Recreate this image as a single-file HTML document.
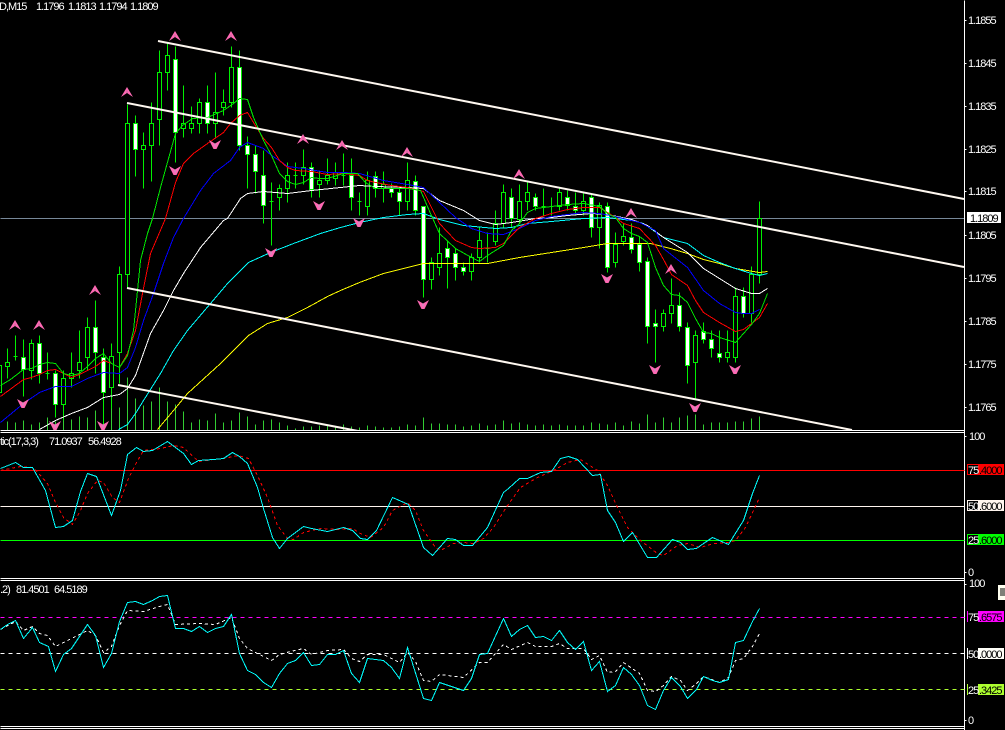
<!DOCTYPE html>
<html><head><meta charset="utf-8"><title>Chart</title>
<style>
html,body{margin:0;padding:0;background:#000;width:1005px;height:730px;overflow:hidden}
svg{display:block}
text{font-family:"Liberation Sans",sans-serif;font-size:11px;letter-spacing:-1px;fill:#fff}
.k{fill:#000}
.l{fill:none;stroke-width:1}
</style></head><body>
<svg width="1005" height="730" viewBox="0 0 1005 730" xmlns="http://www.w3.org/2000/svg" shape-rendering="crispEdges">
<defs>
<g id="u"><path d="M0-5L6 5 0 1-6 5z" fill="#ff69b4"/><path d="M0-1.500V1" stroke="#c06a9a" fill="none"/></g>
<g id="d"><path d="M-6-4L0-.5 6-4 1.500 5H-1.500z" fill="#ff69b4"/><path d="M0-.5V2.500" stroke="#b8a0c8" fill="none"/></g>
</defs>
<rect width="1005" height="730" fill="#000"/>
<g transform="translate(.5 .5)">
<!-- bid line -->
<path d="M0 218H964" stroke="#778899" class="l"/>
<!-- volumes -->
<path class="l" stroke="#32cd32" d="M7 421V430M15 422V430M23 420V430M31 424V430M39 422V430M47 417V430M55 421V430M63 417V430M71 419V430M79 416V430M87 417V430M95 410V430M103 405V430M111 408V430M119 407V430M127 377V430M135 398V430M143 405V430M151 401V430M159 387V430M167 401V430M175 404V430M183 411V430M191 422V430M199 419V430M207 420V430M215 413V430M223 422V430M231 420V430M239 412V430M247 416V430M255 424V430M263 420V430M271 419V430M279 422V430M287 425V430M295 428V430M303 426V430M311 426V430M319 425V430M327 425V430M335 427V430M343 424V430M351 426V430M359 427V430M367 425V430M375 426V430M383 427V430M391 427V430M399 426V430M407 424V430M415 425V430M423 417V430M431 423V430M439 423V430M447 424V430M455 424V430M463 426V430M471 425V430M479 423V430M487 425V430M495 424V430M503 420V430M511 423V430M519 422V430M527 424V430M535 425V430M543 424V430M551 425V430M559 424V430M567 425V430M575 425V430M583 425V430M591 422V430M599 423V430M607 424V430M615 422V430M623 425V430M631 421V430M639 423V430M647 414V430M655 422V430M663 417V430M671 422V430M679 417V430M687 415V430M695 414V430M703 424V430M711 422V430M719 422V430M727 422V430M735 421V430M743 421V430M751 418V430M759 416V430"/>
<!-- wicks and crosses -->
<path class="l" stroke="#00f000" d="M-1 360V398M7 348V378M15 335V360M13 356H17M23 339V396M31 339V379M39 335V383M47 352V379M45 373H49M55 370V417M63 370V420M71 352V387M79 330V378M87 317V370M95 300V373M103 348V425M111 343V408M119 266V383M127 104V288M135 115V176M143 132V188M151 102V181M159 50V145M167 42V90M175 46V162M183 85V137M191 106V133M199 98V133M207 85V133M215 72V137M223 89V115M231 46V107M239 50V150M247 136V188M255 145V193M263 150V223M271 182V245M269 201H273M279 184V210M287 162V202M295 162V188M293 175H297M303 149V184M311 162V197M319 171V197M327 158V184M335 162V185M343 153V185M341 175H345M351 158V210M359 192V215M357 201H361M367 171V215M375 171V197M383 171V202M391 183V197M399 188V215M407 162V210M415 175V215M423 206V297M431 257V289M439 227V275M447 240V288M455 248V280M463 262V275M471 253V280M479 227V262M487 232V262M485 248H489M495 210V245M503 184V228M511 188V227M519 184V223M527 180V210M535 193V210M543 188V215M541 206H545M551 197V215M549 206H553M559 188V210M567 190V210M575 192V214M583 193V215M591 193V237M599 202V248M607 202V272M615 232V267M623 223V245M631 223V253M639 236V271M647 257V343M655 309V362M663 309V331M671 278V323M679 292V331M687 322V383M695 330V398M703 322V343M711 330V357M719 330V362M727 330V362M735 287V362M743 287V317M751 266V322M759 201V283"/>
<!-- hollow bodies -->
<path fill="#000" stroke="#00f000" d="M-3 365h4V392h-4zM5 362h4V366h-4zM29 343h4V370h-4zM61 378h4V404h-4zM69 373h4V378h-4zM77 362h4V370h-4zM85 327h4V357h-4zM109 356h4V387h-4zM117 274h4V352h-4zM125 123h4V274h-4zM141 145h4V149h-4zM149 123h4V145h-4zM157 72h4V119h-4zM165 55h4V72h-4zM181 123h4V128h-4zM189 123h4V128h-4zM197 102h4V123h-4zM213 112h4V123h-4zM221 102h4V107h-4zM229 67h4V102h-4zM277 188h4V197h-4zM285 175h4V188h-4zM301 167h4V175h-4zM317 180h4V184h-4zM325 175h4V180h-4zM333 172h4V178h-4zM365 180h4V206h-4zM381 184h4V188h-4zM405 180h4V201h-4zM429 262h4V279h-4zM437 253h4V267h-4zM469 257h4V271h-4zM477 240h4V257h-4zM493 223h4V241h-4zM501 192h4V223h-4zM517 201h4V219h-4zM525 192h4V201h-4zM557 192h4V206h-4zM581 201h4V210h-4zM597 205h4V227h-4zM613 244h4V262h-4zM621 236h4V241h-4zM661 313h4V326h-4zM669 305h4V313h-4zM693 335h4V362h-4zM725 352h4V357h-4zM733 296h4V357h-4zM749 274h4V313h-4zM757 218h4V274h-4z"/>
<!-- white bodies -->
<path fill="#fff" stroke="#00f000" d="M21 357h4V369h-4zM37 343h4V373h-4zM53 373h4V404h-4zM93 327h4V352h-4zM101 357h4V392h-4zM133 123h4V149h-4zM173 59h4V132h-4zM205 102h4V123h-4zM237 67h4V145h-4zM245 145h4V154h-4zM253 154h4V171h-4zM261 175h4V205h-4zM309 167h4V189h-4zM349 175h4V197h-4zM373 176h4V188h-4zM389 188h4V192h-4zM397 192h4V201h-4zM413 181h4V210h-4zM421 206h4V279h-4zM445 248h4V257h-4zM453 253h4V267h-4zM461 267h4V271h-4zM509 197h4V218h-4zM533 197h4V206h-4zM565 197h4V205h-4zM573 206h4V210h-4zM589 197h4V227h-4zM605 206h4V267h-4zM629 237h4V249h-4zM637 244h4V262h-4zM645 261h4V326h-4zM653 323h4V326h-4zM677 305h4V326h-4zM685 327h4V365h-4zM701 331h4V339h-4zM709 339h4V348h-4zM717 353h4V357h-4zM741 296h4V313h-4z"/>
<!-- moving averages -->
<polyline class="l" stroke="#ffff00" points="157,429 173,410 187,393 220,363 248,335 267,323 287,317 307,307 327,296 340,290 359,282 383,273 407,267 423,263 487,263 519,257 551,252 583,247 607,243 631,243 650,243 670,248 687,253 703,259 719,263 735,268 759,272 767,271"/>
<polyline class="l" stroke="#00ffff" points="118,429 127,424 135,413 143,400 160,373 173,350 187,330 210,303 227,283 248,262 270,252 293,243 320,233 340,227 359,222 383,217 407,214 423,213 439,219 463,225 495,228 511,227 527,223 551,221 583,218 607,217 631,220 643,223 663,237 687,243 703,255 719,262 735,268 751,273 759,275 767,273"/>
<polyline class="l" stroke="#ffffff" points="39,429 55,420 71,413 87,407 103,397 119,394 127,388 135,375 150,333 163,310 173,290 183,273 200,247 223,220 227,218 240,198 247,193 263,191 287,193 311,190 340,187 359,185 375,186 407,187 423,188 439,200 463,210 479,220 495,224 511,222 535,218 551,217 567,215 591,213 607,214 631,219 647,225 663,237 687,252 703,268 719,278 735,288 751,293 759,293 767,288"/>
<polyline class="l" stroke="#0000ff" points="0,422 23,403 39,392 55,386 71,386 87,378 103,372 119,373 127,367 135,347 143,320 153,293 163,263 173,237 183,218 200,190 213,173 230,160 239,147 247,142 263,148 271,155 279,160 287,166 303,168 327,172 343,172 359,173 383,180 407,184 423,187 439,202 455,217 471,228 487,233 503,234 519,228 535,220 551,216 567,214 583,212 599,213 615,216 639,222 655,230 663,248 687,267 703,290 719,303 735,312 743,313 751,313 759,309"/>
<polyline class="l" stroke="#ff0000" points="0,396 23,379 31,377 39,374 47,370 55,369 63,373 71,377 79,374 87,370 95,366 103,360 111,363 119,367 127,353 135,330 142,293 150,253 165,218 175,182 183,163 193,153 207,143 223,132 230,123 239,115 247,112 253,122 263,138 271,147 279,160 287,167 295,170 311,171 327,174 343,173 359,175 367,180 375,182 391,185 407,187 423,191 431,207 439,223 455,240 471,247 479,248 495,247 503,243 519,227 535,218 551,213 567,209 583,207 599,207 615,217 623,223 639,228 655,245 663,259 671,274 687,285 695,300 703,312 719,322 735,331 743,329 759,317 767,303"/>
<polyline class="l" stroke="#00e800" points="0,385 10,379 23,369 31,368 39,364 47,362 55,363 63,373 71,375 79,373 87,366 95,358 103,353 111,363 119,367 127,355 133,330 140,260 147,233 152,218 160,187 175,133 182,125 192,118 207,117 223,110 233,103 239,98 247,99 253,117 263,140 271,155 279,173 287,181 295,184 303,182 311,177 319,178 327,178 343,173 357,173 365,182 375,188 391,188 407,188 420,190 430,213 439,233 455,248 471,257 479,261 487,255 503,245 511,230 519,223 527,212 535,208 551,206 567,204 583,203 599,206 607,213 615,217 623,228 631,233 639,236 647,242 655,267 663,285 671,294 679,295 687,302 695,318 703,332 711,333 719,337 735,342 743,333 751,324 759,313 767,293"/>
</g>
<!-- channel lines -->
<g stroke="#fff8f0" stroke-width="2" fill="none" shape-rendering="geometricPrecision">
<path d="M158 41L964 199"/>
<path d="M127 103L964 267"/>
<path d="M127 288L852 430"/>
<path d="M118 385L358 431"/>
</g>
<!-- arrows -->
<g shape-rendering="geometricPrecision">
<use href="#u" x="175" y="36"/><use href="#u" x="231" y="36"/><use href="#u" x="127" y="92"/><use href="#u" x="303" y="139"/><use href="#u" x="342" y="145"/><use href="#u" x="407" y="152"/><use href="#u" x="519" y="174"/><use href="#u" x="631" y="213"/><use href="#u" x="671" y="269"/><use href="#u" x="95" y="290"/><use href="#u" x="15" y="325"/><use href="#u" x="39" y="325"/>
<use href="#d" x="175" y="170"/><use href="#d" x="215" y="144"/><use href="#d" x="319" y="205"/><use href="#d" x="271" y="252"/><use href="#d" x="359" y="222"/><use href="#d" x="423" y="304"/><use href="#d" x="607" y="278"/><use href="#d" x="655" y="369"/><use href="#d" x="735" y="369"/><use href="#d" x="695" y="407"/><use href="#d" x="23" y="403"/><use href="#d" x="55" y="425"/><use href="#d" x="103" y="425"/>
</g>
<rect y="431" width="1005" height="299" fill="#000"/>
<g transform="translate(.5 .5)">
<!-- separators and axis -->
<path class="l" stroke="#fff" d="M0 430H964M0 432H964M0 578H964M0 580H964M0 726H964M0 728H964M964 0V730"/>
<path class="l" stroke="#fff" d="M964 20h2M964 63h2M964 106h2M964 149h2M964 191h2M964 235h2M964 278h2M964 321h2M964 364h2M964 407h2M964 436h2M964 572h2M964 584h2M964 720h2"/>
<!-- stochastic panel -->
<path class="l" stroke="#ff0000" d="M0 470H964"/>
<path class="l" stroke="#fff5ee" d="M0 506H964"/>
<path class="l" stroke="#00ff00" d="M0 540H964"/>
<polyline class="l" stroke="#ff0000" stroke-dasharray="3 3" points="0,470 10,468 20,466 33,467 47,483 55,502 63,517 72,524 80,510 87,493 97,480 103,482 112,497 119,502 128,478 136,462 143,450 160,448 173,445 183,447 198,461 213,459 223,458 238,455 248,458 257,475 267,497 277,525 287,538 293,539 303,532 320,528 337,529 352,528 360,533 370,537 383,527 392,510 407,502 415,510 423,530 435,547 440,550 453,543 463,542 473,543 483,538 493,527 507,505 520,487 537,477 553,470 567,462 580,459 597,470 607,485 617,507 627,527 640,540 657,553 663,555 677,545 687,543 700,547 713,543 727,542 735,540 745,527 752,512 759,497"/>
<polyline class="l" stroke="#00ffff" points="0,468 15,462 23,467 32,467 45,490 55,527 63,526 72,520 80,491 87,473 96,476 111,515 120,490 127,454 136,447 143,451 152,450 167,441 183,453 191,464 198,460 213,459 223,458 232,452 239,456 247,463 257,487 263,508 272,537 279,548 287,538 303,526 311,528 327,531 343,527 352,530 360,538 367,539 376,530 392,497 408,504 423,547 432,555 447,538 455,539 463,545 472,545 487,527 503,492 508,488 519,478 527,478 540,472 551,471 560,458 568,456 577,459 592,475 600,474 607,510 615,522 623,541 632,532 647,557 656,557 672,539 680,542 687,549 696,548 703,543 712,537 728,544 743,520 752,493 759,475"/>
<!-- third panel -->
<path class="l" stroke="#ff00ff" stroke-dasharray="4 4" d="M0 617H964"/>
<path class="l" stroke="#ffffff" stroke-dasharray="4 4" d="M0 653H964"/>
<path class="l" stroke="#adff2f" stroke-dasharray="4 4" d="M0 689H964"/>
<polyline class="l" stroke="#ffffff" stroke-dasharray="3 3" points="0,629 15,621 23,630 32,626 39,633 47,635 55,646 71,638 87,630 95,635 103,652 111,646 119,625 127,610 143,611 159,606 167,604 175,624 199,623 215,624 231,617 239,638 247,648 263,656 271,660 279,654 290,651 303,648 311,654 327,650 343,649 351,658 359,661 367,654 383,654 399,662 407,652 415,661 423,680 431,681 439,674 463,677 479,662 487,662 503,644 511,649 527,642 535,646 551,646 559,643 567,648 583,648 591,659 599,655 607,672 615,671 623,662 639,673 647,690 655,691 663,685 671,676 680,680 687,690 696,683 703,676 719,682 728,677 735,660 743,658 752,646 759,633"/>
<polyline class="l" stroke="#00ffff" points="0,629 7,624 15,620 23,638 32,627 39,642 48,646 55,671 63,654 71,648 87,624 95,635 103,667 111,653 119,621 127,602 135,601 143,604 152,600 159,596 167,595 175,628 183,628 191,631 199,626 207,632 215,628 223,626 231,614 239,653 247,670 255,674 263,682 271,687 279,673 287,663 295,660 303,652 311,665 319,664 327,654 335,654 343,650 351,673 359,682 367,658 383,660 391,667 399,678 407,647 423,698 431,700 439,682 463,690 471,678 479,654 487,653 503,618 511,636 519,629 527,625 535,637 543,636 551,640 559,630 567,642 575,649 583,641 591,670 599,661 607,691 615,685 623,667 631,674 639,685 647,705 655,709 663,690 671,677 680,686 687,698 696,689 703,676 712,680 719,682 728,679 735,642 743,640 752,621 759,608"/>
</g>
<!-- headers -->
<text x="-1" y="10">D,M15</text>
<text x="36" y="10">1.1796</text><text x="68" y="10">1.1813</text><text x="99" y="10">1.1794</text><text x="130" y="10">1.1809</text>
<text x="0" y="445">tic(17,3,3)</text><text x="49" y="445">71.0937</text><text x="88" y="445">56.4928</text>
<text x="0" y="593">.2)</text><text x="16" y="593">81.4501</text><text x="54" y="593">64.5189</text>
<!-- price axis -->
<text x="968" y="24">1.1855</text><text x="968" y="67">1.1845</text><text x="968" y="110">1.1835</text><text x="968" y="153">1.1825</text><text x="968" y="195">1.1815</text><text x="968" y="239">1.1805</text><text x="968" y="282">1.1795</text><text x="968" y="325">1.1785</text><text x="968" y="368">1.1775</text><text x="968" y="411">1.1765</text>
<rect x="967" y="212" width="34" height="11" fill="#fff"/><text class="k" x="970" y="222">1.1809</text>
<!-- stochastic axis -->
<text x="969" y="440">100</text><text x="968" y="576">0</text>
<rect x="967" y="464" width="37" height="11" fill="#ff0000"/><rect x="968" y="465" width="10" height="9" fill="#000"/><text x="968" y="474">75</text><text class="k" x="979" y="474">.4000</text>
<rect x="967" y="500" width="37" height="11" fill="#fff5ee"/><rect x="968" y="501" width="10" height="9" fill="#000"/><text x="968" y="510">50</text><text class="k" x="979" y="510">.6000</text>
<rect x="967" y="534" width="37" height="11" fill="#00ff00"/><rect x="968" y="535" width="10" height="9" fill="#000"/><text x="968" y="544">25</text><text class="k" x="979" y="544">.6000</text>
<!-- third axis -->
<text x="969" y="587">100</text><text x="968" y="724">0</text>
<rect x="998" y="585" width="7" height="15" fill="#fffff0"/><path d="M1000 589h5M1000 591h5M1000 593h5M1000 595h5" stroke="#000" fill="none"/>
<rect x="978" y="611" width="26" height="11" fill="#ff00ff"/><rect x="967" y="611" width="1" height="11" fill="#ff00ff"/><text x="968" y="621">75</text><text class="k" x="979" y="621">.6575</text>
<rect x="978" y="648" width="26" height="11" fill="#fffff8"/><rect x="967" y="648" width="1" height="11" fill="#fff"/><text x="968" y="658">50</text><text class="k" x="979" y="658">.0000</text>
<rect x="978" y="684" width="26" height="11" fill="#adff2f"/><rect x="967" y="684" width="1" height="11" fill="#adff2f"/><text x="968" y="694">25</text><text class="k" x="979" y="694">.3425</text>
</svg>
</body></html>
